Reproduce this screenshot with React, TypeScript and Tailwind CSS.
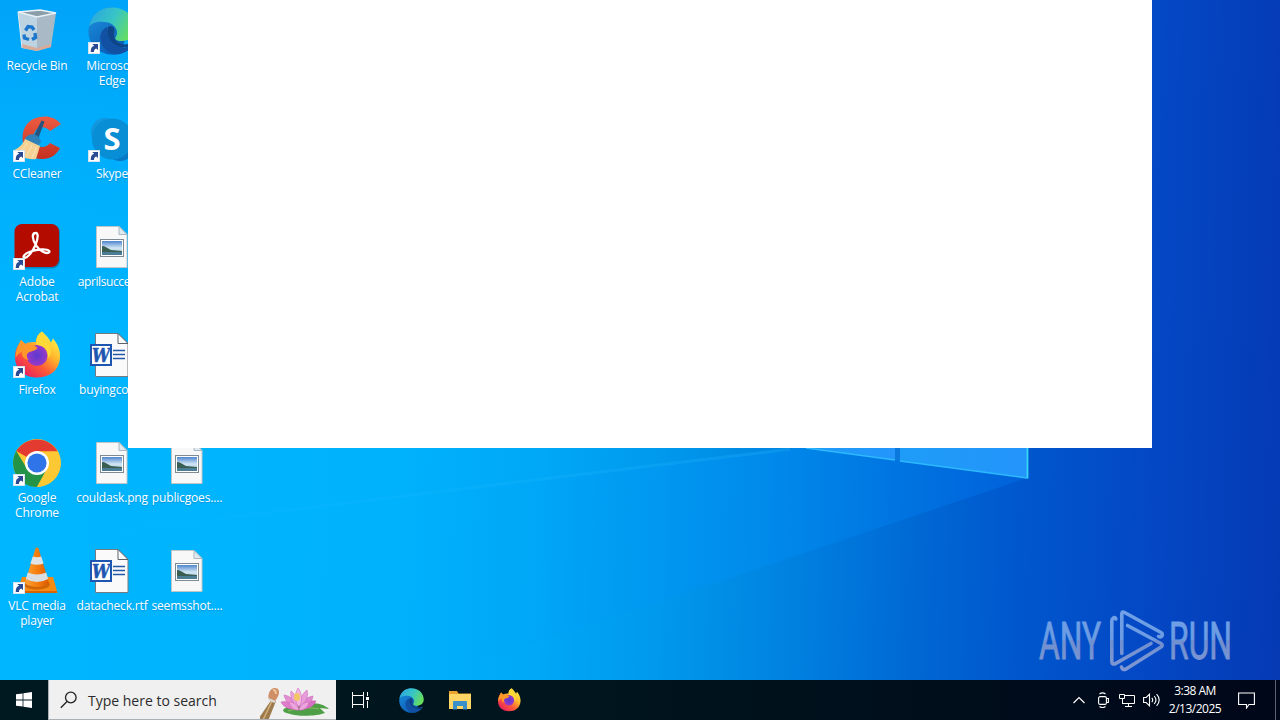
import React from "react";

function Shortcut() {
  return (
    <g>
      <rect x="0.5" y="35.500" width="11" height="11" fill="#fff" stroke="#d3e4f0" />
      <path d="M2.700 45c0-3.800 1.100-5.700 3.500-6.200L4.200 37h5.800v6L8.200 41.500c-1.600.5-2.200 1.500-2.200 3.500z" fill="#2b4a94" />
    </g>
  );
}

function RecycleBin() {
  return (
    <svg width="48" height="48" viewBox="0 0 48 48">
      <path d="M5 5l19 5v34L9 41z" fill="#bdd3e1" />
      <path d="M24 10l19-4-5 34-14 4z" fill="#a9b9c6" />
      <path d="M9 37l15 4v3L9 41zM24 41l14-4v3l-14 4z" fill="#d9ab99" />
      <path d="M5 5l22-2 16 3-19 4z" fill="#8a9da9" stroke="#e8f2f7" strokeWidth="1.400" />
      <path d="M5 5l4 36" stroke="#dfeaf1" strokeWidth="1" fill="none" />
      <g fill="none" stroke="#1b76cc" strokeWidth="3.400">
        <path d="M12.500 23.500l2.500-4 4 .5 2 3M22 26l.5 4.500-3.500 2M16 32.500l-4.500-1.500-.5-3.500" />
      </g>
    </svg>
  );
}

function EdgeArt({ size, shortcut }: { size: number; shortcut?: boolean }) {
  return (
    <svg width={size} height={size} viewBox="0 0 48 48">
      <defs>
        <linearGradient id="edgeTop" x1="0" y1="0.2" x2="1" y2="0.6">
          <stop offset="0" stopColor="#2aa6e0" />
          <stop offset="0.5" stopColor="#38c5c5" />
          <stop offset="1" stopColor="#6bdf58" />
        </linearGradient>
        <linearGradient id="edgeLow" x1="0" y1="0" x2="0.6" y2="1">
          <stop offset="0" stopColor="#1c93e0" />
          <stop offset="1" stopColor="#0b5cb5" />
        </linearGradient>
      </defs>
      <path d="M.5 24C1 10 11 .5 24 .5l14 24-4 22C14 52 0 38 .5 24z" fill="url(#edgeLow)" />
      <path d="M1 20C3 8 12 .5 24 .5c14 0 23.500 10 23.500 21.500C47.500 30 41 34 34 34c-6 0-8-2-6-4.500 3-4 0-12-8-14C12 13.500 4 15 1 20z" fill="url(#edgeTop)" />
      <path d="M19 20c-6 3-8 9-6 15 2 7 8 12 16 12 7 0 13-4 16-9-4 2-8 3-12 2-9-1-15-8-14-20z" fill="#1150a2" />
      <path d="M20 20c-3 10 4 19 14 20 4 .5 8-.5 11-2 1.500-2 0-2.500-1-2-10 4-18-1-18-8 0-3 1-5 0-7-2-2.500-5-2.500-6-1z" fill="#0f4488" />
      {shortcut && <Shortcut />}
    </svg>
  );
}

function CCleaner() {
  return (
    <svg width="48" height="48" viewBox="0 0 48 48">
      <defs>
        <linearGradient id="ccRed" x1="0" y1="0" x2="0" y2="1">
          <stop offset="0" stopColor="#ee5c42" />
          <stop offset="1" stopColor="#c42f20" />
        </linearGradient>
      </defs>
      <path d="M48 9C42 2 34 .5 27 2 14 4 8 15 10 27c2 13 11 18 21 17 8-1 13-5 16-11l-10-5c-3 4-8 5-12 3-5-3-6-13-1-17 4-3 10-2 13 2z" fill="url(#ccRed)" />
      <path d="M28.500 5.500l3 1-7 19-5-2z" fill="#24537f" />
      <path d="M13 22c5-5 13-3 15 5l-5 6-12-7z" fill="#2f81b8" />
      <path d="M12 24l15 7-4 13c-9 1-16-2-22-9 5-2 9-6 11-11z" fill="#f6d193" />
      <path d="M14 28c-2 5-5 7-8 9M19 30c-2 5-4 8-6 11M23 32c-1 5-2 7-4 11" stroke="#fbe6bd" fill="none" />
      <Shortcut />
    </svg>
  );
}

function Skype() {
  return (
    <svg width="48" height="48" viewBox="0 0 48 48">
      <circle cx="17" cy="17" r="14" fill="#1296dc" />
      <circle cx="32" cy="32" r="14" fill="#0878c5" />
      <circle cx="24.500" cy="24" r="20.500" fill="#078ed4" />
      <text x="24" y="35" textAnchor="middle" fontFamily="Open Sans, sans-serif" fontWeight="700" fontSize="31" fill="#fff">S</text>
      <Shortcut />
    </svg>
  );
}

function Acrobat() {
  return (
    <svg width="48" height="48" viewBox="0 0 48 48">
      <rect x="2" y="2" width="45" height="43.500" rx="7.500" fill="#075b8a" opacity=".5" />
      <rect x="1.500" y="1" width="44.500" height="43" rx="7.500" fill="#b30b00" />
      <path d="M22.500 10c2.800-.5 3 5 0 12-3 7-8 13-11 13-2.500-1 0-4.500 6-6.500 7-2.300 16-3.200 18.500-.7 1.500 2-2 3.300-6.500.8-5-2.800-9.500-9.600-9.700-15.100 0-2 .9-3.400 2.700-3.500z" fill="none" stroke="#fff" strokeWidth="2.300" />
      <Shortcut />
    </svg>
  );
}

function FirefoxArt({ size, shortcut }: { size: number; shortcut?: boolean }) {
  return (
    <svg width={size} height={size} viewBox="0 0 48 48">
      <defs>
        <linearGradient id="foxBody" x1="0.85" y1="0.1" x2="0.2" y2="0.95">
          <stop offset="0" stopColor="#fff047" />
          <stop offset="0.35" stopColor="#ffb52c" />
          <stop offset="0.65" stopColor="#ff5a36" />
          <stop offset="1" stopColor="#e8205f" />
        </linearGradient>
        <radialGradient id="foxGlobe">
          <stop offset="0" stopColor="#5b38ce" />
          <stop offset="1" stopColor="#9a3ac8" />
        </radialGradient>
      </defs>
      <path d="M29 .5c4 3.500 7 7 9 11l2-4c5 6 7.500 12 7 19.500C46 40 36 46.500 24 46.500 11 46.500 2 38 2 26 2 20 4 15 7 12l1-3 4 4c3-2 7-2 11-2 0-5 2-8.500 6-10.500z" fill="url(#foxBody)" />
      <circle cx="24" cy="24.500" r="10.500" fill="url(#foxGlobe)" />
      <path d="M8 9l5.500 5c5-1 9 0 11 3-2 3-6 3-8 4-4 2-3 5-1 8-5-1-7-4-6.500-8-3 1-5 3-6.500 6 0-7 2-12 5.500-18z" fill="#ff982b" />
      <path d="M24 14c6 0 12 5 11 13 3-3 4-8 1-13-4-5-5-9-6-13-6 3-8 8-6 13z" fill="#ffd935" />
      {shortcut && <Shortcut />}
    </svg>
  );
}

function Chrome() {
  return (
    <svg width="48" height="48" viewBox="0 0 48 48">
      <circle cx="24" cy="24" r="23.900" fill="#fcc934" />
      <path d="M24 24V12.500h20.700A24 24 0 0 0 3.300 12z" fill="#e43b30" />
      <path d="M3.300 12A24 24 0 0 0 24 48l10-18.200L24 24 14 29.800z" fill="#239447" />
      <path d="M24 12.500h20.700A24 24 0 0 1 24 47.900l10-18z" fill="#fcc934" />
      <circle cx="24" cy="24" r="12" fill="#fff" />
      <circle cx="24" cy="24" r="9.600" fill="#2f74e8" />
      <Shortcut />
    </svg>
  );
}

function Vlc() {
  return (
    <svg width="48" height="48" viewBox="0 0 48 48">
      <defs>
        <linearGradient id="cone" x1="0" x2="1">
          <stop offset="0" stopColor="#ffa238" />
          <stop offset="0.5" stopColor="#f57e0d" />
          <stop offset="1" stopColor="#dc5900" />
        </linearGradient>
      </defs>
      <path d="M9 30h31l4.500 16H4z" fill="#f58b12" />
      <path d="M4 44h40v2H4z" fill="#d86305" />
      <path d="M12 35c4 6 20 6 24 0l1 3c-3 6-23 6-26 0z" fill="#cf6408" />
      <path d="M22.500 1.500q1.500-2 3 0L36 36c-4 5-20 5-24 0z" fill="url(#cone)" />
      <path d="M19.800 9.500q4.200 1.500 8.400 0l2.400 7q-6.600 2.500-13.200 0z" fill="#dfe3e6" />
      <path d="M14.800 25.500q9.200 4 18.400 0l2 6.500q-11.200 6-22.400 0z" fill="#d9dde0" />
      <Shortcut />
    </svg>
  );
}

function ImageFile() {
  return (
    <svg width="48" height="48" viewBox="0 0 48 48">
      <defs>
        <linearGradient id="sky" x1="0" y1="0" x2="0" y2="1">
          <stop offset="0" stopColor="#4f86cf" />
          <stop offset="0.5" stopColor="#d0e5f2" />
          <stop offset="1" stopColor="#9cc1dc" />
        </linearGradient>
      </defs>
      <path d="M8.500 3.500H31l8 8v33H8.500z" fill="#f8f8f8" stroke="#c0c5c8" />
      <path d="M31 3.500v8h8z" fill="#dfe9ef" stroke="#a9b9c3" />
      <rect x="12.500" y="16.500" width="23" height="17" fill="#fff" stroke="#7e8b95" />
      <rect x="14" y="18" width="20" height="14" fill="url(#sky)" />
      <path d="M14 23c3 0 5 2 9 4l11 1v2H14z" fill="#3a5f52" />
      <path d="M14 29h20v3H14z" fill="#4b7d95" />
    </svg>
  );
}

function WordFile() {
  return (
    <svg width="48" height="48" viewBox="0 0 48 48">
      <path d="M7.500 2.500H30l10 10v33H7.500z" fill="#fafafa" stroke="#777b80" />
      <path d="M30 2.500v10h10z" fill="#fff" stroke="#5d6268" />
      <path d="M25 19.500h12M25 23.500h12M25 27.500h12" stroke="#2459a9" strokeWidth="1.300" />
      <rect x="3" y="14" width="20" height="20" fill="#fff" stroke="#1d55b0" strokeWidth="2" />
      <text x="13" y="30.500" textAnchor="middle" fontFamily="DejaVu Serif, serif" fontWeight="700" fontStyle="italic" fontSize="18" textLength="18" lengthAdjust="spacingAndGlyphs" fill="#1d55b0" stroke="#1d55b0" strokeWidth=".5">W</text>
    </svg>
  );
}

type Item = { icon: React.ReactNode; lines: string[]; tight?: boolean };

const columns: Item[][] = [
  [
    { icon: <RecycleBin />, lines: ["Recycle Bin"] },
    { icon: <CCleaner />, lines: ["CCleaner"] },
    { icon: <Acrobat />, lines: ["Adobe", "Acrobat"] },
    { icon: <FirefoxArt size={48} shortcut />, lines: ["Firefox"] },
    { icon: <Chrome />, lines: ["Google", "Chrome"] },
    { icon: <Vlc />, lines: ["VLC media", "player"] },
  ],
  [
    { icon: <EdgeArt size={48} shortcut />, lines: ["Microsoft", "Edge"] },
    { icon: <Skype />, lines: ["Skype"] },
    { icon: <ImageFile />, lines: ["aprilsucces...."], tight: true },
    { icon: <WordFile />, lines: ["buyingcor...."] },
    { icon: <ImageFile />, lines: ["couldask.png"] },
    { icon: <WordFile />, lines: ["datacheck.rtf"] },
  ],
  [
    { icon: <ImageFile />, lines: ["publicgoes...."] },
    { icon: <ImageFile />, lines: ["seemsshot...."] },
  ],
];

function Wallpaper() {
  return (
    <svg className="absolute inset-0" width="1280" height="680" viewBox="0 0 1280 680">
      <defs>
        <linearGradient id="wall" gradientUnits="userSpaceOnUse" x1="0" y1="560" x2="1280" y2="600">
          <stop offset="0" stopColor="#00b6ff" />
          <stop offset="0.3" stopColor="#00b2fc" />
          <stop offset="0.42" stopColor="#00a8f7" />
          <stop offset="0.52" stopColor="#0098ec" />
          <stop offset="0.62" stopColor="#0081e0" />
          <stop offset="0.72" stopColor="#0067d3" />
          <stop offset="0.8" stopColor="#0056cd" />
          <stop offset="0.9" stopColor="#0447c4" />
          <stop offset="1" stopColor="#053ab4" />
        </linearGradient>
        <linearGradient id="leftShade" x1="0" y1="0" x2="0" y2="1">
          <stop offset="0" stopColor="#00a4f9" />
          <stop offset="1" stopColor="#00b2ff" stopOpacity="0" />
        </linearGradient>
        <linearGradient id="beam" gradientUnits="userSpaceOnUse" x1="450" y1="0" x2="1027" y2="0">
          <stop offset="0" stopColor="#009cff" stopOpacity="0" />
          <stop offset="0.55" stopColor="#0090f6" stopOpacity="0.4" />
          <stop offset="1" stopColor="#006ce8" stopOpacity="0.5" />
        </linearGradient>
        <linearGradient id="beamLine" gradientUnits="userSpaceOnUse" x1="100" y1="0" x2="800" y2="0">
          <stop offset="0" stopColor="#30c4ff" stopOpacity="0" />
          <stop offset="1" stopColor="#20b4ff" stopOpacity="0.3" />
        </linearGradient>
        <linearGradient id="pane" x1="0" x2="1">
          <stop offset="0" stopColor="#1e9cf8" />
          <stop offset="1" stopColor="#2495fb" />
        </linearGradient>
      </defs>
      <rect width="1280" height="680" fill="url(#wall)" />
      <rect width="140" height="420" fill="url(#leftShade)" />
      <path d="M0 545L800 448H1027V478L450 672L0 680z" fill="url(#beam)" />
      <path d="M100 533L790 449" stroke="url(#beamLine)" strokeWidth="3" />
      <path d="M806 448H895V460z" fill="url(#pane)" />
      <path d="M900 448H1027V478L900 461z" fill="url(#pane)" />
      <path d="M895 448h5v13l-5-1z" fill="#0a78dc" />
      <path d="M806 448L895 460M900 461L1027 478" fill="none" stroke="#2cb9ff" strokeWidth="1.500" />
      <path d="M1027.500 448V478.500" stroke="#35d5fa" strokeWidth="1.800" />
    </svg>
  );
}

function Watermark() {
  return (
    <svg className="absolute left-[1036px] top-[600px]" width="240" height="80" viewBox="1036 600 240 80">
      <defs>
        <linearGradient id="mark" gradientUnits="userSpaceOnUse" x1="0" y1="606" x2="0" y2="674">
          <stop offset="0" stopColor="#72a3e8" />
          <stop offset="0.5" stopColor="#6b9be2" />
          <stop offset="0.51" stopColor="#6f8fd0" />
          <stop offset="1" stopColor="#8299d3" />
        </linearGradient>
      </defs>
      <g fill="url(#mark)" stroke="url(#mark)" strokeWidth="0.900" fontFamily="Roboto, sans-serif" fontSize="52" fontWeight="400">
        <text x="1039" y="659" textLength="62" lengthAdjust="spacingAndGlyphs">ANY</text>
        <text x="1169" y="659" textLength="63" lengthAdjust="spacingAndGlyphs">RUN</text>
      </g>
      <g fill="none" stroke="url(#mark)" strokeWidth="3.600" strokeLinejoin="round" strokeLinecap="round">
        <path d="M1121.800 653.500V614q0-3 2.800-1.500L1161 632.500q2.500 2 .5 4-1.500 1-3-.2" />
        <path d="M1127.500 625.500L1161 643.500q2.500 1.500 0 3.500L1126 669q-3.500 1.500-4.500-2" />
        <path d="M1115.800 619q-.5-2-2.500-1-1.500 1-1.500 3v40q0 4.500 4 2.300L1151 643.500" />
      </g>
    </svg>
  );
}

function Lotus() {
  return (
    <svg width="74" height="38" viewBox="262 681 74 38">
      <path d="M274 699l4 2-8 20h-11z" fill="#9c7a4c" />
      <path d="M274 701l-9 19" stroke="#d2b07c" strokeWidth="1.500" />
      <path d="M270.500 698c-.5-5 2-9.500 6-10 4-.2 5.500 3 4 7-1 3-3 6-5 6.500-3 .5-4.500-1-5-3.500z" fill="#cf8f66" />
      <path d="M275 690q3 0 3 4" stroke="#f1c4a0" strokeWidth="2" fill="none" />
      <path d="M270.500 698l7 3-1 2-6-2.500z" fill="#d9dcdc" />
      <path d="M285 710c3-4 16-7 28-7 7 0 14 2 18 6l-9-1 5 5c-8 3-26 4-35 1-4-1-7-2-7-4z" fill="#4f9f48" />
      <path d="M290 711c10-3 22-4 31-2" stroke="#86bd5e" fill="none" />
      <g stroke="#c95fb4" strokeWidth=".5">
        <path d="M300 709c-8 1-14-1-17-7 7-2 13 1 17 7z" fill="#de7cca" />
        <path d="M302 709c8 1 14-3 16-8-7-1-13 2-16 8z" fill="#d670c4" />
        <path d="M300 708c-8-2-13-7-14-13 7 1 12 6 14 13z" fill="#e48fd4" />
        <path d="M302 708c3-8 7-11 13-12-1 7-6 11-13 12z" fill="#df86d0" />
        <path d="M300 707c-6-4-8-11-7-16 5 4 8 10 7 16z" fill="#eba3db" />
        <path d="M302 707c-1-7 2-13 7-17 2 6-1 13-7 17z" fill="#e89cd9" />
        <path d="M301 707c-5-6-4-14-1-19 4 5 5 13 1 19z" fill="#f2b7e4" />
        <path d="M301 710c-5 1-9-3-10-8 5 0 9 3 10 8zM301 710c5 1 9-3 10-8-5 0-9 3-10 8z" fill="#eca5dc" />
      </g>
      <ellipse cx="299" cy="697" rx="3" ry="4" fill="#f4c565" />
    </svg>
  );
}

function Taskbar() {
  return (
    <div className="relative flex h-10 w-full items-stretch bg-gradient-to-r from-[#001820] via-[#00141d] to-[#000719] text-white">
      <div className="flex w-12 items-center justify-center">
        <svg width="16" height="16" viewBox="0 0 16 16" fill="#fff">
          <path d="M0 2.300L6.600 1.400v6.100H0zM7.400 1.300L16 0v7.500H7.400zM0 8.400h6.600v6.200L0 13.700zM7.400 8.400H16V16l-8.600-1.300z" />
        </svg>
      </div>
      <div className="flex w-72 items-center border-b border-l border-[#a9afb2] bg-[#f0f0f0]">
        <svg className="ml-[11px]" width="18" height="18" viewBox="0 0 18 18" fill="none" stroke="#222" strokeWidth="1.300">
          <circle cx="10.800" cy="6.500" r="5.300" />
          <path d="M7 10.500L.8 16.700" />
        </svg>
        <span className="ml-[10px] w-[172px] whitespace-nowrap pt-[2px] text-[14px] leading-5 text-[#2b2b2b]">Type here to search</span>
        <Lotus />
      </div>
      <div className="flex w-12 items-center justify-center">
        <svg width="17" height="16" viewBox="0 0 17 16" fill="none" stroke="#fff">
          <path d="M.5 3.500h11v9H.5zM.5 0v3.500M11.500 0v3.500M.5 12.500V16M11.500 12.500V16M15.500 0v4M15.500 9v7" />
          <rect x="14" y="5" width="3" height="3" fill="#fff" stroke="none" />
        </svg>
      </div>
      <div className="flex w-[54px] items-center justify-center"><EdgeArt size={25} /></div>
      <div className="flex w-11 items-center justify-center">
        <svg width="22" height="20" viewBox="0 0 22 20">
          <path d="M0 1h8l1.500 2.500H22V19H0z" fill="#e9a52e" />
          <path d="M0 4h22v15H0z" fill="#ffd566" />
          <path d="M4 12q0-1 1-1h12q1 0 1 1v7.500h-4V16H8v3.500H4z" fill="#3a90c8" />
        </svg>
      </div>
      <div className="flex w-[54px] items-center justify-center"><FirefoxArt size={24} /></div>
      <div className="ml-auto flex items-center">
        <svg className="mr-3" width="12" height="8" viewBox="0 0 12 8" fill="none" stroke="#fff" strokeWidth="1.200"><path d="M.5 7L6 1.500 11.500 7" /></svg>
        <svg className="mr-2" width="14" height="16" viewBox="0 0 14 16" fill="none" stroke="#fff" strokeWidth="1.100">
          <rect x="1.600" y="4.600" width="7.800" height="7.800" rx="1.500" />
          <path d="M9.400 6.500h2v4h-2M2.500 2Q5.500-.2 8.500 2M2.500 14.500q3 2 6 0" />
        </svg>
        <svg className="mr-[7px]" width="17" height="15" viewBox="0 0 17 15" fill="none" stroke="#fff">
          <path d="M5.500 2.500h10v8h-12V7.500M9.500 10.500v3M6 13.500h7" />
          <path d="M.5 1.500h5v4h-5zM3.500 5.500V11" />
        </svg>
        <svg className="mr-[7px]" width="18" height="14" viewBox="0 0 18 14" fill="none" stroke="#fff" strokeWidth="1.100">
          <path d="M.6 4.500h2.600L6.500 1.200v11.600L3.200 9.500H.6zM8.800 4.800q1.800 2.200 0 4.400M11.200 3q3.500 4 0 8M13.600 1.200q5.200 5.800 0 11.600" />
        </svg>
        <div className="w-[54px] whitespace-nowrap text-center text-[12px] leading-[18px] tracking-[-0.5px]">
          <div>3:38 AM</div>
          <div>2/13/2025</div>
        </div>
        <svg className="ml-4 mr-5" width="17" height="17" viewBox="0 0 17 17" fill="none" stroke="#fff" strokeWidth="1.100"><path d="M.6 1h15.800v11.500H11L8.500 16v-3.500H.6z" /></svg>
        <div className="mr-1 h-10 w-px bg-[#5c6370]" />
      </div>
    </div>
  );
}

export default function App() {
  return (
    <div className="flex h-[720px] w-[1280px] flex-col overflow-hidden font-['Open_Sans','Noto_Sans',sans-serif]">
      <main className="relative h-[680px] overflow-hidden">
        <Wallpaper />
        <div className="relative flex h-full">
          {columns.map((items, c) => (
            <div key={c} className={c === 2 ? "w-[75px] pt-[439px]" : "w-[75px] pt-[7px]"}>
              {items.map((item) => (
                <div key={item.lines.join(" ")} className="flex h-[108px] w-[74px] flex-col items-center">
                  {item.icon}
                  <div className={`mt-[3px] whitespace-nowrap text-center text-[12px] leading-[15px] text-white [text-shadow:0_1px_1px_rgba(0,60,120,0.25)] ${item.tight ? "tracking-[-0.4px]" : "tracking-[-0.17px]"}`}>
                    {item.lines.map((line) => <div key={line}>{line}</div>)}
                  </div>
                </div>
              ))}
            </div>
          ))}
        </div>
        <Watermark />
        <div className="absolute left-32 top-0 h-[448px] w-[1024px] bg-white" />
      </main>
      <Taskbar />
    </div>
  );
}
